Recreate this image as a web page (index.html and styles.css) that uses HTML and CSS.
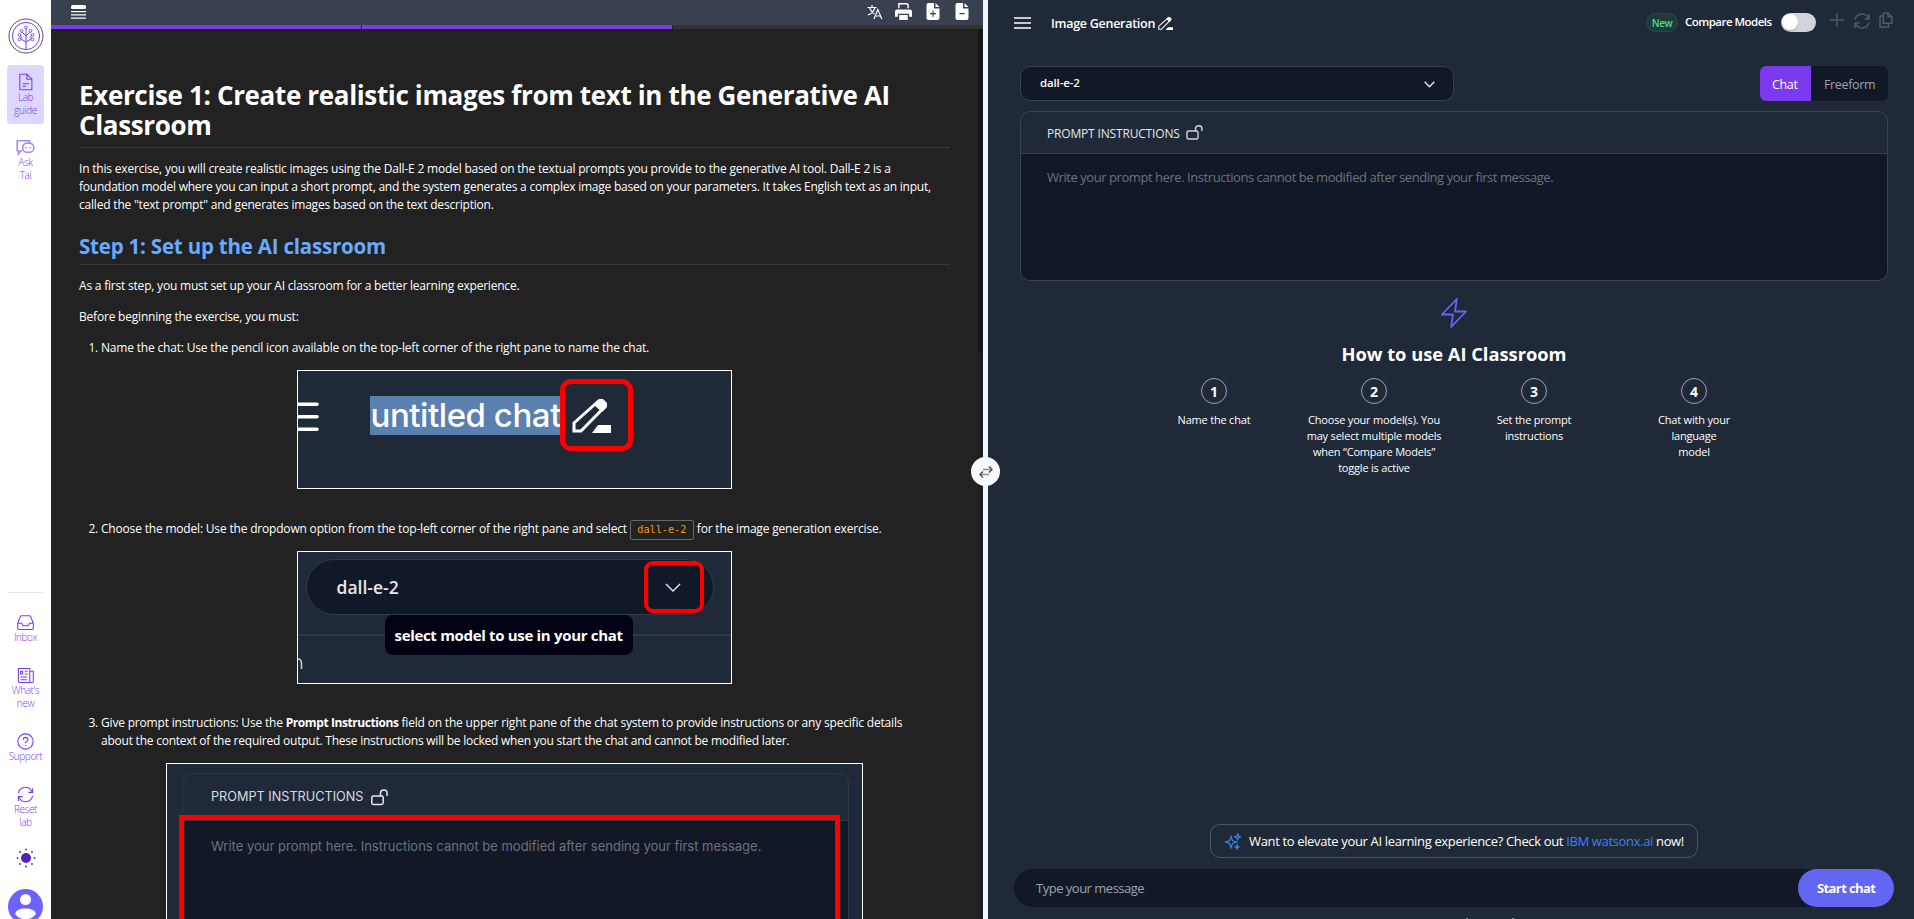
FILE: index.html
```html
<!DOCTYPE html>
<html lang="en">
<head>
<meta charset="utf-8">
<title>AI Classroom</title>
<link rel="stylesheet" href="styles.css">
</head>
<body>
<div class="app">
  <nav class="side">
    <svg class="logo" viewBox="0 0 36 36"><circle cx="18" cy="18" r="17" stroke="#4b5563"/><circle cx="18" cy="18" r="13.6" stroke="#7c3aed"/><path stroke="#7c3aed" d="M18 31V11M18 24l-5-3v-3M18 24l5-3v-3M18 18l-4-4M18 18l4-4"/><g stroke="#7c5ce0"><circle cx="18" cy="9.5" r="1.4"/><circle cx="13.5" cy="12.8" r="1.4"/><circle cx="22.5" cy="12.8" r="1.4"/><circle cx="11.5" cy="17" r="1.4"/><circle cx="24.5" cy="17" r="1.4"/><circle cx="11.5" cy="21.5" r="1.4"/><circle cx="24.5" cy="21.5" r="1.4"/></g></svg>
    <a class="item active"><svg viewBox="0 0 24 24"><path d="M14 1H4v22h17V8l-7-7v7h7M8 18h5M8 14.500h9"/></svg><span>Lab<br>guide</span></a>
    <a class="item ask"><svg viewBox="0 0 24 20"><path d="M8 14H6l-3 4v-4H1.500V1.500H17V4"/><rect x="8.500" y="4.500" width="14" height="11.500" rx="5.500"/><path d="M13 11V9.500M18 11V9.500"/></svg><span>Ask<br>Tai</span></a>
    <hr>
    <a class="item inbox"><svg viewBox="0 0 24 22"><path d="M1 12 4.500 3q.5-1.500 2-1.500h11q1.500 0 2 1.500L23 12v7q0 2-2 2H3q-2 0-2-2zM1 12h5.500l2 3.500h7l2-3.500H23"/></svg><span>Inbox</span></a>
    <a class="item gap"><svg viewBox="0 0 24 22"><path d="M18 4V1H2v18q0 2 2 2h17q2 0 2-2V5h-5v14q0 2 2 2M5 13h9M5 17h9M11 5h4M11 9h4"/><path d="M5 5h3v4H5z"/></svg><span>What's<br>new</span></a>
    <a class="item gap"><svg viewBox="0 0 24 24"><circle cx="12" cy="12" r="10.800"/><path d="M8.800 9.500q0-3.300 3.300-3.300t3.300 3q0 1.800-1.800 2.900T12 14.500M12 17v1.500"/></svg><span>Support</span></a>
    <a class="item gap"><svg viewBox="0 0 24 22"><path d="M2 9a10 10 0 0 1 18-4l2 3M22 2v6h-6M22 13a10 10 0 0 1-18 4l-2-3M2 20v-6h6"/></svg><span>Reset<br>lab</span></a>
    <svg class="sun" viewBox="0 0 20 20"><circle cx="10" cy="10" r="5"/><circle cx="10" cy="1.500" r=".9"/><circle cx="10" cy="18.500" r=".9"/><circle cx="1.500" cy="10" r=".9"/><circle cx="18.500" cy="10" r=".9"/><circle cx="4" cy="4" r=".9"/><circle cx="16" cy="4" r=".9"/><circle cx="4" cy="16" r=".9"/><circle cx="16" cy="16" r=".9"/></svg>
    <svg class="avatar" viewBox="0 0 35 35"><circle cx="17.500" cy="17.500" r="17.500" fill="#6c63ff"/><circle cx="17.500" cy="10.500" r="5.500" fill="#fff"/><path fill="#fff" d="M7 25q1-5.500 10.500-5.500T28 25q-4 5.500-10.500 5.500T7 25"/></svg>
  </nav>

  <section class="guide">
    <header class="toolbar">
      <svg class="toc" viewBox="0 0 15 15"><rect width="15" height="4" rx="1.500"/><path d="M0 6h15v1.200H0zM0 9.300h15v1.200H0zM0 12.600h15v1.200H0z"/></svg>
      <svg class="t-lang" viewBox="0 0 16 16"><path d="M.5 3.500h9M5 1v2.500M8 3.500Q6.500 9 1 11M2.500 3.500Q4 8 7.500 10M7 15l3.800-9.500L14.800 15M8.300 12h5.200"/></svg>
      <svg class="t-print" viewBox="0 0 16 16"><path d="M3 0h8.500L13 1.500V5h-1.300V2l-.7-.7H4.300V5H3zM2 6h12q2 0 2 2v5h-2.700V10H2.700v3H0V8q0-2 2-2zM4 11.200h8V16H4z"/></svg>
      <svg class="t-file" viewBox="0 0 13 17"><path fill-rule="evenodd" d="M2 0h5.500v5.500H13V15q0 2-2 2H2q-2 0-2-2V2q0-2 2-2zM5.900 7.500V10H3.500v1.200h2.400v2.500h1.200v-2.500h2.400V10H7.100V7.500zM9 0l4 4H9z"/></svg>
      <svg class="t-file last" viewBox="0 0 13 17"><path fill-rule="evenodd" d="M2 0h5.500v5.500H13V15q0 2-2 2H2q-2 0-2-2V2q0-2 2-2zM4 10h5v1.200H4zM9 0l4 4H9z"/></svg>
    </header>
    <div class="progress"><i></i><i></i><i class="todo"></i></div>
    <div class="scroller">
      <article class="doc">
        <h1>Exercise 1: Create realistic images from text in the Generative AI<br>Classroom</h1>
        <p class="intro">In this exercise, you will create realistic images using the Dall-E 2 model based on the textual prompts you provide to the generative AI tool. Dall-E 2 is a<br><span class="snug">foundation model where you can input a short prompt, and the system generates a complex image based on your parameters. It takes English text as an input,</span><br>called the "text prompt" and generates images based on the text description.</p>
        <h2>Step 1: Set up the AI classroom</h2>
        <p>As a first step, you must set up your AI classroom for a better learning experience.</p>
        <p>Before beginning the exercise, you must:</p>
        <ol>
          <li>Name the chat: Use the pencil icon available on the top-left corner of the right pane to name the chat.
            <div class="shot s1"><svg class="bars" viewBox="0 0 22 30"><path d="M0 2.200h19M0 14.700h19M0 27.300h19"/></svg><span class="sel">untitled chat</span><b class="mark"><svg viewBox="0 0 39 34"><path fill="none" stroke="#fff" stroke-width="3" d="M2 24 26 2.500l6 6L9 32H2z"/><path fill="#fff" d="M22 6 27 0h4l4 4v4l-5 5zM26 26h13v8H20z"/></svg></b></div></li>
          <li class="tight">Choose the model: Use the dropdown option from the top-left corner of the right pane and select <code>dall-e-2</code> for the image generation exercise.
            <div class="shot s2"><div class="pill">dall-e-2</div><b class="mark"><svg viewBox="0 0 16 9"><path d="m1 1 7 7 7-7"/></svg></b><span class="rule"></span><span class="tip">select model to use in your chat</span><svg class="bit" viewBox="0 0 5 12"><path d="M0 1q3.500 0 3.500 5v5"/></svg></div></li>
          <li>Give prompt instructions: Use the <strong>Prompt Instructions</strong> field on the upper right pane of the chat system to provide instructions or any specific details<br><span class="snug">about the context of the required output. These instructions will be locked when you start the chat and cannot be modified later.</span>
            <div class="shot s3"><div class="panel"><div class="ph"><span>PROMPT INSTRUCTIONS</span><svg viewBox="0 0 17 17"><path d="M2.500 7h8q1.700 0 1.700 1.700v5q0 1.700-1.700 1.700h-8q-1.700 0-1.700-1.700v-5Q.8 7 2.500 7zM9.500 7V4q0-3 3.300-3t3.300 3v3"/></svg></div><div class="pb">Write your prompt here. Instructions cannot be modified after sending your first message.</div></div><b class="mark"></b></div></li>
        </ol>
      </article>
      <div class="track"><i></i></div>
    </div>
  </section>

  <div class="divider"><span class="swap"><svg viewBox="0 0 14 12"><path d="M10 .5l3 3-3 3M4 5.500l-3 3 3 3"/><path stroke="#888d96" stroke-width="1.500" d="M4 3.500h8M10 8.500H2"/></svg></span></div>

  <main class="chat">
    <header class="top">
      <svg class="burger" viewBox="0 0 17 12"><path d="M0 1h17M0 6h17M0 11h17"/></svg>
      <span class="title">Image Generation</span>
      <svg class="pencil" viewBox="0 0 39 34"><path fill="none" stroke="#e5e7eb" stroke-width="3" d="M2 24 26 2.500l6 6L9 32H2z"/><path fill="#fff" d="M22 6 27 0h4l4 4v4l-5 5zM26 27h13v7H20z"/></svg>
      <span class="new">New</span><span class="cmp">Compare Models</span><span class="toggle"></span>
      <svg class="i-plus" viewBox="0 0 14 14"><path d="M7 0v14M0 7h14"/></svg>
      <svg class="i-ref" viewBox="0 0 16 16"><path d="M1 6.500a7.200 7.200 0 0 1 12.500-3L15 5.500M15 1v5h-4.500M15 9.500a7.200 7.200 0 0 1-12.500 3L1 10.500M1 15v-5h4.500"/></svg>
      <svg class="i-copy" viewBox="0 0 14 16"><path d="M5.500 1H9l4 4v6.300H4.300V2.200Q4.300 1 5.500 1zM9 1v4h4M4 4H1v11h8.500v-3.500"/></svg>
    </header>
    <div class="row">
      <div class="select"><span>dall-e-2</span><svg viewBox="0 0 11 7"><path d="m.7.700 4.800 5 4.800-5"/></svg></div>
      <div class="seg"><span class="on">Chat</span><span class="off">Freeform</span></div>
    </div>
    <section class="prompt">
      <div class="phead"><span>PROMPT INSTRUCTIONS</span><svg viewBox="0 0 17 15"><path d="M2.500 6h8q1.500 0 1.500 1.500v5q0 1.500-1.500 1.500h-8Q1 14 1 12.500v-5Q1 6 2.500 6zM9.500 6V3.500q0-2.700 3.200-2.700t3.200 2.700V6"/></svg></div>
      <div class="pbody">Write your prompt here. Instructions cannot be modified after sending your first message.</div>
    </section>
    <section class="how">
      <svg class="bolt" viewBox="0 0 26 30"><path d="M15.800 1 1 16.500h11L10.200 29 25 13.500H14z"/></svg>
      <h3>How to use AI Classroom</h3>
      <div class="steps">
        <div><b>1</b><span>Name the chat</span></div>
        <div><b>2</b><span>Choose your model(s). You<br>may select multiple models<br>when “Compare Models”<br>toggle is active</span></div>
        <div><b>3</b><span>Set the prompt<br>instructions</span></div>
        <div><b>4</b><span>Chat with your<br>language<br>model</span></div>
      </div>
    </section>
    <div class="banner"><svg viewBox="0 0 16 17"><path d="M6 3.500 7.500 7.700 11.700 9 7.500 10.500 6 14.700 4.500 10.500.5 9l4-1.300zM12.700.7l.8 2.300 2 .8-2 .8-.8 2.200-.8-2.200-2-.8 2-.8zM12 12l.5 1.500 1.500.5-1.500.5L12 16l-.5-1.500L10 14l1.500-.5z"/></svg><span>Want to elevate your AI learning experience? Check out <a>IBM watsonx.ai</a> now!</span></div>
    <div class="input"><span class="type">Type your message</span><span class="start">Start chat</span></div>
    <footer class="foot"><i></i><i></i></footer>
  </main>
</div>
</body>
</html>
```
FILE: styles.css
```css
* { box-sizing: border-box; }
body { margin: 0; overflow: hidden; background: #1f2937; color: #fff; font-family: "Open Sans", "Noto Sans", sans-serif; }
svg { display: block; flex: none; fill: none; }
.app { display: flex; width: 1914px; height: 919px; overflow: hidden; }

.side { width: 51px; flex: none; background: #fff; display: flex; flex-direction: column; align-items: center; padding-top: 18px; color: #7c3aed; }
.logo { width: 36px; height: 36px; margin-bottom: 11px; }
.item { width: 37px; flex: none; display: flex; flex-direction: column; align-items: center; font-size: 10px; font-weight: 300; letter-spacing: -.4px; line-height: 13px; text-align: center; white-space: nowrap; }
.item svg { width: 17px; height: 17px; stroke: #7c3aed; stroke-width: 1.500; }
.active { height: 59px; background: #ddd6fe; border-radius: 4px; padding-top: 8px; }
.active svg { height: 18px; }
.ask { padding-top: 15px; margin-bottom: 1px; }
.ask svg { width: 19px; stroke: #a78bfa; stroke-width: 2; }
.side hr { flex: none; width: 35px; height: 1px; border: 0; background: #e5e5e5; margin: 409px 0 21px; }
.gap { margin-top: 23px; }
.sun { width: 20px; height: 20px; fill: #5b21b6; margin: 19px 0 21px; }
.avatar { width: 35px; height: 35px; }

.guide { width: 932px; flex: none; display: flex; flex-direction: column; background: #222; }
.toolbar { height: 25px; flex: none; background: #394150; display: flex; align-items: flex-start; padding: 0 14px 0 20px; }
.toolbar svg { fill: #fff; }
.toc { width: 15px; height: 15px; margin: 5px auto 0 0; }
.toolbar .t-lang { width: 16px; height: 16px; margin: 4px 12px 0 0; fill: none; stroke: #fff; stroke-width: 1.200; }
.t-print { width: 17px; height: 17px; margin: 3px 14px 0 0; }
.t-file { width: 14px; height: 17px; margin: 3px 15px 0 0; }
.toolbar .last { margin-right: 0; }
.progress { height: 4px; flex: none; display: flex; gap: 1px; background: #222; }
.progress i { width: 310px; background: #7c3aed; }
.progress .todo { background: #333; }
.scroller { flex: 1; min-height: 0; display: flex; overflow: hidden; }
.track { width: 5px; flex: none; background: #1f1f1f; }
.track i { display: block; height: 324px; background: #161616; border-radius: 0 0 3px 3px; }
.doc { flex: 1; min-width: 0; padding: 51px 28px 0; font-size: 12px; line-height: 18px; letter-spacing: -.21px; white-space: nowrap; font-weight: 600; letter-spacing: -.36px; }
.doc { font-weight: 500; letter-spacing: -.205px; }
.doc .snug { letter-spacing: -.23px; }
.doc h1 { margin: 0; padding-bottom: 8px; font-size: 26px; line-height: 30px; height: 68px; border-bottom: 1px solid #383838; font-weight: 700; letter-spacing: -.35px; }
.doc p { margin: 0 0 13px; }
.doc .intro { margin: 12px 0 18px; letter-spacing: -.195px; }
.doc h2 { margin: 0 0 12px; height: 33px; padding-top: 1px; font-size: 20.500px; line-height: 26px; color: #66abff; border-bottom: 1px solid #383838; font-weight: 700; }
.doc ol { margin: 0; padding-left: 22px; letter-spacing: -.185px; }
.doc li { margin-bottom: 31px; }
.doc .tight { margin-bottom: 30px; }
strong { letter-spacing: -.42px; }
code { display: inline-block; height: 20px; margin: -3px 0; line-height: 17px; border: 1px solid #666; border-radius: 2px; padding: 0 6.500px; color: #ff9800; letter-spacing: 0; font-family: "DejaVu Sans Mono", monospace; font-size: 10.200px; vertical-align: middle; }
.shot { position: relative; width: 435px; height: 119px; margin: 13px auto 0; border: 1px solid #fff; background: #202938; overflow: hidden; left: -11.500px; letter-spacing: 0; }
.mark { position: absolute; border: 5px solid #f00; border-radius: 11px; }
.s1 .bars { position: absolute; left: 0; top: 31px; width: 22px; height: 30px; stroke: #fff; stroke-width: 3.600; stroke-linecap: round; }
.sel { position: absolute; left: 72px; top: 25px; width: 192px; height: 39px; background: #5a80b0; font: 500 33px/39px Inter, sans-serif; letter-spacing: -.45px; padding-left: 1px; }
.s1 .mark { left: 262px; top: 8px; width: 73px; height: 72px; background: #202938; padding: 15px 7px; }
.s1 .mark svg { width: 39px; height: 34px; }
.s2 { height: 133px; }
.pill { position: absolute; left: 8px; top: 7px; width: 408px; height: 56px; border: 1px solid #2f3a4a; border-radius: 28px; background: #111827; font-size: 17.500px; font-weight: 600; line-height: 55px; padding-left: 30px; color: #e5e7eb; }
.s2 .mark { left: 346px; top: 9px; width: 60px; height: 52px; border-width: 4.500px; border-radius: 9px; padding: 18px 17px; }
.s2 .mark svg { width: 16px; height: 9px; stroke: #ddd; stroke-width: 1.500; }
.rule { position: absolute; left: 0; top: 82px; width: 100%; height: 2px; background: #2d3748; }
.tip { position: absolute; left: 87px; top: 63px; width: 248px; height: 40px; border-radius: 8px; background: #020214; padding-left: 10px; font-weight: 700; font-size: 15px; line-height: 41px; letter-spacing: -.32px; }
.bit { position: absolute; left: 0; top: 106px; width: 5px; height: 12px; stroke: #ccc; stroke-width: 1.600; }
.s3 { width: 697px; height: 260px; left: -11px; }
.panel { position: absolute; left: 15px; top: 9px; width: 667px; height: 260px; border: 1px solid #2d3748; border-radius: 10px; overflow: hidden; font-family: Inter, sans-serif; }
.ph { display: flex; height: 46px; align-items: center; padding-left: 28px; font-size: 12.700px; font-weight: 400; color: #d8dbe0; gap: 8px; }
.ph svg { width: 17px; height: 17px; stroke: #e5e7eb; stroke-width: 1.500; }
.pb { height: 220px; border-top: 1px solid #2d3748; background: #121826; color: #6b7280; font-size: 13px; font-weight: 400; padding: 16px 28px; }
.s3 .mark { left: 12px; top: 51px; width: 661px; height: 260px; border-radius: 0; }

.divider { position: relative; width: 5px; flex: none; background: #f1f5fd; z-index: 2; }
.swap { position: absolute; left: -12px; top: 457px; width: 29px; height: 29px; border-radius: 50%; background: #f8fafc; padding: 9px 8px; }
.swap svg { width: 14px; height: 12px; stroke: #374151; stroke-width: 1.300; }

.chat { flex: 1; background: #202937; padding: 0 20px 0 26px; display: flex; flex-direction: column; white-space: nowrap; }
.top { height: 45px; display: flex; align-items: flex-start; }
.burger { width: 17px; height: 12px; margin-top: 17px; stroke: #fff; stroke-width: 1.500; }
.title { margin: 14px 3px 0 20px; width: 104px; font-size: 12.500px; line-height: 19px; font-weight: 600; letter-spacing: -.27px; }
.pencil { width: 15px; height: 13px; margin: 17px auto 0 0; }
.new { width: 32px; height: 19px; margin: 13px 7px 0 0; border: 1px solid #1b5040; border-radius: 10px; background: #203a3c; color: #4ade80; font-size: 10px; font-weight: 600; line-height: 18px; letter-spacing: -.4px; text-align: center; }
.cmp { width: 96px; margin-top: 13px; font-size: 11.500px; font-weight: 600; line-height: 18px; letter-spacing: -.53px; }
.toggle { width: 35px; height: 19px; margin-top: 13px; border-radius: 10px; background: #d1d5db; }
.toggle::after { content: ""; display: block; width: 16px; height: 16px; margin: 1px; border-radius: 50%; background: #fff; box-shadow: 0 1px 2px #0003; }
.top [class^="i-"] { stroke: #4f5864; stroke-width: 1.500; }
.i-plus { width: 14px; height: 14px; margin: 13px 10px 0 14px; }
.i-ref { width: 16px; height: 16px; margin: 13px 9px 0 0; }
.i-copy { width: 14px; height: 16px; margin: 12px 1px 0 0; }
.row { display: flex; justify-content: space-between; margin: 21px 6px 10px; height: 35px; }
.select { width: 434px; border: 1px solid #374151; border-radius: 10px; background: #111827; display: flex; justify-content: space-between; align-items: center; padding: 0 18px 0 19px; font-size: 11.500px; font-weight: 600; letter-spacing: -.15px; }
.select span { margin-top: -2px; }
.select svg { width: 11px; height: 7px; margin-top: 2px; stroke: #e5e7eb; stroke-width: 1.400; }
.seg { display: flex; width: 128px; border-radius: 6px; overflow: hidden; background: #111827; font-size: 12.500px; line-height: 37px; letter-spacing: -.35px; }
.on { width: 51px; padding-left: 12px; background: #7c3aed; font-weight: 500; }
.off { padding-left: 13px; color: #9ca3af; }
.prompt { margin: 0 6px; height: 170px; border: 1px solid #374151; border-radius: 10px; overflow: hidden; }
.phead { height: 41px; display: flex; align-items: center; gap: 7px; padding-left: 26px; font-size: 12px; letter-spacing: -.17px; color: #e5e7eb; }
.phead span { width: 132px; margin-top: 1px; }
.phead svg { width: 17px; height: 15px; margin-top: -1px; stroke: #d1d5db; stroke-width: 1.400; }
.pbody { height: 129px; border-top: 1px solid #374151; background: #111827; padding: 13px 26px; font-size: 13px; line-height: 20px; letter-spacing: -.44px; color: #6b7280; }
.how { height: 543px; padding-top: 17px; display: flex; flex-direction: column; align-items: center; }
.bolt { width: 26px; height: 30px; stroke: #6366f1; stroke-width: 1.800; stroke-linejoin: round; }
.how h3 { margin: 13px 0 12px; font-size: 18.300px; line-height: 25px; font-weight: 700; }
.steps { display: grid; grid-template-columns: repeat(4, 160px); text-align: center; font-size: 11px; line-height: 16px; letter-spacing: -.2px; font-weight: 500; }
.steps div { display: flex; flex-direction: column; align-items: center; }
.steps b { width: 26px; height: 26px; margin-bottom: 8px; border: 1px solid #9ca3af; border-radius: 50%; font-size: 14px; line-height: 25px; }
.banner { align-self: center; width: 488px; height: 34px; border: 1px solid #4b5563; border-radius: 10px; display: flex; align-items: center; gap: 8px; padding-left: 14px; font-size: 13px; font-weight: 500; letter-spacing: -.35px; }
.banner svg { width: 16px; height: 17px; stroke: #3b82f6; stroke-width: 1.200; }
.banner a { color: #3b82f6; }
.input { height: 38px; margin-top: 11px; border-radius: 19px; background: #111827; display: flex; justify-content: space-between; font-size: 13px; line-height: 38px; padding-left: 22px; color: #9ca3af; }
.type { letter-spacing: -.5px; }
.start { width: 96px; border-radius: 19px; background: #6366f1; color: #fff; font-weight: 700; letter-spacing: -.6px; padding-left: 19px; }
.foot { height: 12px; display: flex; align-items: flex-end; gap: 44px; padding-left: 452px; }
.foot i { width: 2px; height: 1px; background: #8a919d; }
```
